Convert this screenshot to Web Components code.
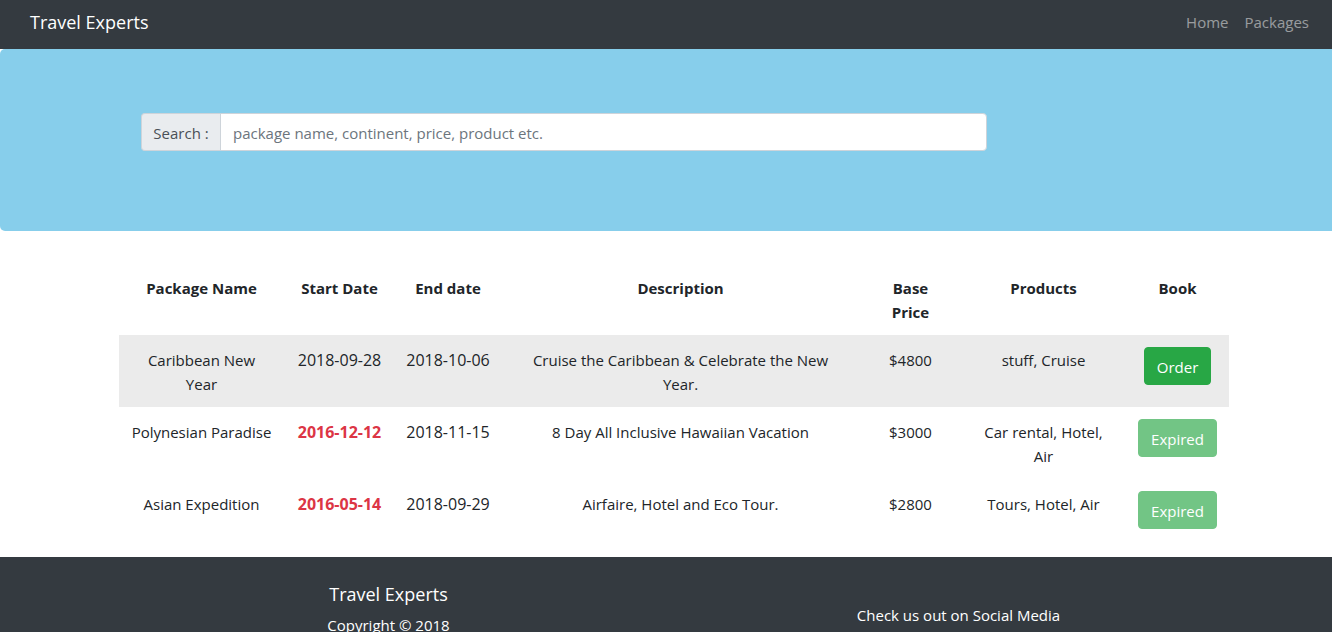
<!DOCTYPE html>
<html lang="en">
<head>
<meta charset="utf-8">
<meta name="viewport" content="width=device-width, initial-scale=1">
<title>Travel Experts</title>
<style>
  html { scrollbar-width: none; }
  body {
    margin: 0;
    background: #fff;
    color: #212529;
    font: 15px/24px "Open Sans", "Noto Sans", sans-serif;
  }
</style>
</head>
<body>
<travel-navbar>
  <a href="#home">Home</a>
  <a href="#packages">Packages</a>
</travel-navbar>
<main>
  <package-search></package-search>
  <package-table></package-table>
</main>
<travel-footer>
  <span slot="social">Check us out on Social Media</span>
</travel-footer>

<script>
class ShadowElement extends HTMLElement {
  constructor() {
    super();
    this.attachShadow({ mode: "open" }).innerHTML = this.constructor.markup;
  }
}

class TravelNavbar extends ShadowElement {
  static markup = `
    <style>
      :host { display: block; background: #343a40; }
      nav { display: flex; justify-content: space-between; align-items: center; padding: 0 23px 5px 30px; min-height: 44px; }
      .brand { color: #fff; font-size: 18px; line-height: 28px; text-decoration: none; }
      .links { display: flex; gap: 16px; }
      ::slotted(a) { color: rgba(255, 255, 255, .5); text-decoration: none; }
    </style>
    <nav><a class="brand" href="#">Travel Experts</a><div class="links"><slot></slot></div></nav>`;
}

class PackageSearch extends ShadowElement {
  static markup = `
    <style>
      * { box-sizing: border-box; }
      :host { display: block; background: #87ceeb; border-radius: 5px 0 0 5px; padding: 64px 15px 80px 31px; }
      .container { max-width: 1110px; margin: 0 auto; padding: 0 22px; }
      .group { display: flex; max-width: 846px; height: 38px; }
      label { flex: none; width: 79px; padding: 7px 0; text-align: center; background: #e9ecef; color: #495057;
        border: 1px solid #ced4da; border-right: 0; border-radius: 4px 0 0 4px; }
      input { flex: 1; min-width: 0; padding: 7px 12px 5px; font: inherit; color: #495057; background: #fff;
        border: 1px solid #ced4da; border-radius: 0 4px 4px 0; }
      input::placeholder { color: #6c757d; opacity: 1; }
    </style>
    <div class="container"><div class="group">
      <label for="query">Search :</label>
      <input id="query" type="text" placeholder="package name, continent, price, product etc.">
    </div></div>`;
}

class BookButton extends ShadowElement {
  static markup = `
    <style>
      :host { display: block; height: 38px; margin-bottom: 10px; }
      button { box-sizing: border-box; height: 38px; padding: 7px 12px 5px; font: inherit; color: #fff;
        background: #28a745; border: 1px solid #28a745; border-radius: 4px; cursor: pointer; }
      button:disabled { opacity: .65; cursor: default; }
    </style>
    <button type="button"><slot></slot></button>`;
  connectedCallback() {
    this.shadowRoot.querySelector("button").disabled = this.hasAttribute("disabled");
  }
}

class PackageTable extends ShadowElement {
  static markup = `
    <style>
      * { box-sizing: border-box; }
      :host { display: block; padding: 32px 15px 6px 31px; }
      table { width: 100%; max-width: 1110px; margin: 0 auto; table-layout: fixed; border-collapse: collapse; text-align: center; }
      th, td { padding: 13px 12px 11px; vertical-align: top; }
      td:nth-child(4), th:nth-child(4), .price { padding-left: 24px; padding-right: 24px; }
      td:nth-child(2), td:nth-child(3) { padding-left: 8px; padding-right: 8px; font-size: 16px; white-space: nowrap; }
      td:last-child { padding: 12px 0; }
      tbody tr.open { background: #ebebeb; }
      .past { color: #dc3545; font-weight: 700; }
      .name, .products { width: 165px; }
      .start { width: 111px; }
      .end { width: 106px; }
      .price { width: 101px; }
      .book { width: 103px; }
    </style>
    <table>
      <thead><tr>
        <th class="name">Package Name</th><th class="start">Start Date</th><th class="end">End date</th>
        <th>Description</th><th class="price">Base Price</th><th class="products">Products</th><th class="book">Book</th>
      </tr></thead>
      <tbody>
        <tr class="open"><td>Caribbean New Year</td><td>2018-09-28</td><td>2018-10-06</td>
          <td>Cruise the Caribbean &amp; Celebrate the New Year.</td><td>$4800</td><td>stuff, Cruise</td>
          <td><book-button>Order</book-button></td></tr>
        <tr><td>Polynesian Paradise</td><td class="past">2016-12-12</td><td>2018-11-15</td>
          <td>8 Day All Inclusive Hawaiian Vacation</td><td>$3000</td><td>Car rental, Hotel, Air</td>
          <td><book-button disabled>Expired</book-button></td></tr>
        <tr><td>Asian Expedition</td><td class="past">2016-05-14</td><td>2018-09-29</td>
          <td>Airfaire, Hotel and Eco Tour.</td><td>$2800</td><td>Tours, Hotel, Air</td>
          <td><book-button disabled>Expired</book-button></td></tr>
      </tbody>
    </table>`;
}

class TravelFooter extends ShadowElement {
  static markup = `
    <style>
      :host { display: block; background: #343a40; color: #fff; }
      footer { padding: 24px 0 24px 15px; }
      .columns { display: grid; grid-template-columns: 1fr 1fr; max-width: 1140px; margin: 0 auto; text-align: center; }
      h5 { margin: 0 0 6px; font-size: 18px; line-height: 26px; font-weight: 400; }
      p { margin: 0; }
      .social { padding-top: 22px; }
    </style>
    <footer><div class="columns">
      <div><h5>Travel Experts</h5><p>Copyright © 2018</p></div>
      <div class="social"><slot name="social"></slot></div>
    </div></footer>`;
}

customElements.define("travel-navbar", TravelNavbar);
customElements.define("package-search", PackageSearch);
customElements.define("book-button", BookButton);
customElements.define("package-table", PackageTable);
customElements.define("travel-footer", TravelFooter);
</script>
</body>
</html>
